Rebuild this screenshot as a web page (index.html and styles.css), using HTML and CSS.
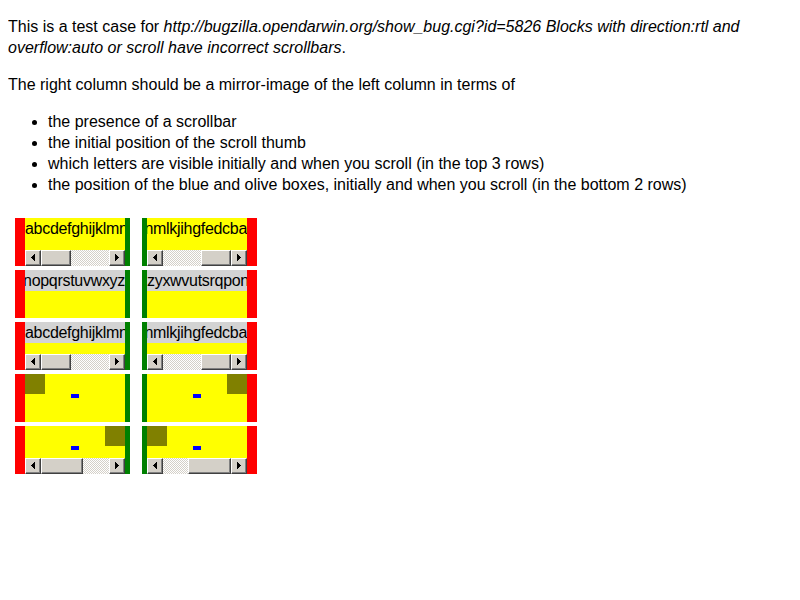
FILE: index.html
```html
<!DOCTYPE html>
<html>
<head>
<meta charset="utf-8">
<link rel="stylesheet" href="styles.css">
</head>
<body>
<p>This is a test case for <i>http://bugzilla.opendarwin.org/show_bug.cgi?id=5826 Blocks with direction:rtl and overflow:auto or scroll have incorrect scrollbars</i>.</p>
<p>The right column should be a mirror-image of the left column in terms of</p>
<ul>
<li>the presence of a scrollbar</li>
<li>the initial position of the scroll thumb</li>
<li>which letters are visible initially and when you scroll (in the top 3 rows)</li>
<li>the position of the blue and olive boxes, initially and when you scroll (in the bottom 2 rows)</li>
</ul>
<div class="grid">
  <!-- row 1 -->
  <div class="box ltr">
    <div class="view"><span class="txt">abcdefghijklmnopqrstuvwxyz</span></div>
    <div class="sb"><div class="btn"><svg class="arr" width="4" height="7"><path d="M3 0h1v7h-1zM2 1h1v5h-1zM1 2h1v3h-1zM0 3h1v1h-1z"/></svg></div><div class="track"><div class="thumb w30"></div></div><div class="btn"><svg class="arr" width="4" height="7"><path d="M0 0h1v7h-1zM1 1h1v5h-1zM2 2h1v3h-1zM3 3h1v1h-1z"/></svg></div></div>
  </div>
  <div class="box rtl">
    <div class="view end"><span class="txt rev">abcdefghijklmnopqrstuvwxyz</span></div>
    <div class="sb"><div class="btn"><svg class="arr" width="4" height="7"><path d="M3 0h1v7h-1zM2 1h1v5h-1zM1 2h1v3h-1zM0 3h1v1h-1z"/></svg></div><div class="track"><div class="thumb w30 end"></div></div><div class="btn"><svg class="arr" width="4" height="7"><path d="M0 0h1v7h-1zM1 1h1v5h-1zM2 2h1v3h-1zM3 3h1v1h-1z"/></svg></div></div>
  </div>
  <!-- row 2 -->
  <div class="box ltr">
    <div class="view end"><span class="txt gray">abcdefghijklmnopqrstuvwxyz</span></div>
  </div>
  <div class="box rtl">
    <div class="view"><span class="txt gray rev">abcdefghijklmnopqrstuvwxyz</span></div>
  </div>
  <!-- row 3 -->
  <div class="box ltr">
    <div class="view"><span class="txt gray">abcdefghijklmnopqrstuvwxyz</span></div>
    <div class="sb"><div class="btn"><svg class="arr" width="4" height="7"><path d="M3 0h1v7h-1zM2 1h1v5h-1zM1 2h1v3h-1zM0 3h1v1h-1z"/></svg></div><div class="track"><div class="thumb w30"></div></div><div class="btn"><svg class="arr" width="4" height="7"><path d="M0 0h1v7h-1zM1 1h1v5h-1zM2 2h1v3h-1zM3 3h1v1h-1z"/></svg></div></div>
  </div>
  <div class="box rtl">
    <div class="view end"><span class="txt gray rev">abcdefghijklmnopqrstuvwxyz</span></div>
    <div class="sb"><div class="btn"><svg class="arr" width="4" height="7"><path d="M3 0h1v7h-1zM2 1h1v5h-1zM1 2h1v3h-1zM0 3h1v1h-1z"/></svg></div><div class="track"><div class="thumb w30 end"></div></div><div class="btn"><svg class="arr" width="4" height="7"><path d="M0 0h1v7h-1zM1 1h1v5h-1zM2 2h1v3h-1zM3 3h1v1h-1z"/></svg></div></div>
  </div>
  <!-- row 4 -->
  <div class="box ltr">
    <div class="view canvas"><div class="olive at-l"></div><div class="blue"></div></div>
  </div>
  <div class="box rtl">
    <div class="view canvas"><div class="olive at-r"></div><div class="blue"></div></div>
  </div>
  <!-- row 5 -->
  <div class="box ltr">
    <div class="view canvas"><div class="olive at-r"></div><div class="blue"></div></div>
    <div class="sb"><div class="btn"><svg class="arr" width="4" height="7"><path d="M3 0h1v7h-1zM2 1h1v5h-1zM1 2h1v3h-1zM0 3h1v1h-1z"/></svg></div><div class="track"><div class="thumb w42"></div></div><div class="btn"><svg class="arr" width="4" height="7"><path d="M0 0h1v7h-1zM1 1h1v5h-1zM2 2h1v3h-1zM3 3h1v1h-1z"/></svg></div></div>
  </div>
  <div class="box rtl">
    <div class="view canvas"><div class="olive at-l"></div><div class="blue"></div></div>
    <div class="sb"><div class="btn"><svg class="arr" width="4" height="7"><path d="M3 0h1v7h-1zM2 1h1v5h-1zM1 2h1v3h-1zM0 3h1v1h-1z"/></svg></div><div class="track"><div class="thumb w43 end"></div></div><div class="btn"><svg class="arr" width="4" height="7"><path d="M0 0h1v7h-1zM1 1h1v5h-1zM2 2h1v3h-1zM3 3h1v1h-1z"/></svg></div></div>
  </div>
</div>
</body>
</html>
```
FILE: styles.css
```css
body {
  margin: 0 8px 8px;
  font-family: "Liberation Sans", Arial, sans-serif;
  font-size: 16px;
  line-height: 21px;
  color: #000;
  background: #fff;
}
p { margin: 16px 0; }
ul { margin: 16px 0; padding-left: 40px; }

.grid {
  display: grid;
  grid-template-columns: 115px 115px;
  column-gap: 12px;
  row-gap: 4px;
  padding: 7px;
}
.box {
  width: 100px;
  height: 48px;
  background: #ffff00;
  display: flex;
  flex-direction: column;
}
.box.ltr { border-left: 10px solid #ff0000; border-right: 5px solid #008000; }
.box.rtl { border-left: 5px solid #008000; border-right: 10px solid #ff0000; }

.view {
  flex: 1;
  min-height: 0;
  overflow: hidden;
  display: flex;
  align-items: flex-start;
  justify-content: flex-start;
}
.view.end { justify-content: flex-end; }
.txt {
  flex-shrink: 0;
  white-space: nowrap;
  display: block;
  letter-spacing: -0.3px;
}
.txt.gray { background: #d3d3d3; }
.txt.rev { direction: rtl; unicode-bidi: bidi-override; }

.canvas { position: relative; }
.olive { position: absolute; top: 0; width: 20px; height: 20px; background: #808000; }
.olive.at-l { left: 0; }
.olive.at-r { left: 80px; }
.blue { position: absolute; top: 20px; left: 46px; width: 8px; height: 4px; background: #0000ff; }

.sb { display: flex; height: 16px; flex-shrink: 0; }
.btn, .thumb {
  box-sizing: border-box;
  height: 16px;
  background: #d4d0c8;
  border-style: solid;
  border-width: 1px;
  border-color: #ffffff #404040 #404040 #ffffff;
  box-shadow: inset -1px -1px 0 #808080;
}
.btn {
  width: 16px;
  display: flex;
  align-items: center;
  justify-content: center;
  flex-shrink: 0;
}
.arr { display: block; fill: #000; margin: 0 1px 1px 0; }
.track {
  flex: 1;
  display: flex;
  background: repeating-conic-gradient(#d4d0c8 0 25%, #ffffff 0 50%) 0 0 / 2px 2px;
}
.thumb.w30 { width: 30px; }
.thumb.w42 { width: 42px; }
.thumb.w43 { width: 43px; }
.thumb.end { margin-left: auto; }
```
